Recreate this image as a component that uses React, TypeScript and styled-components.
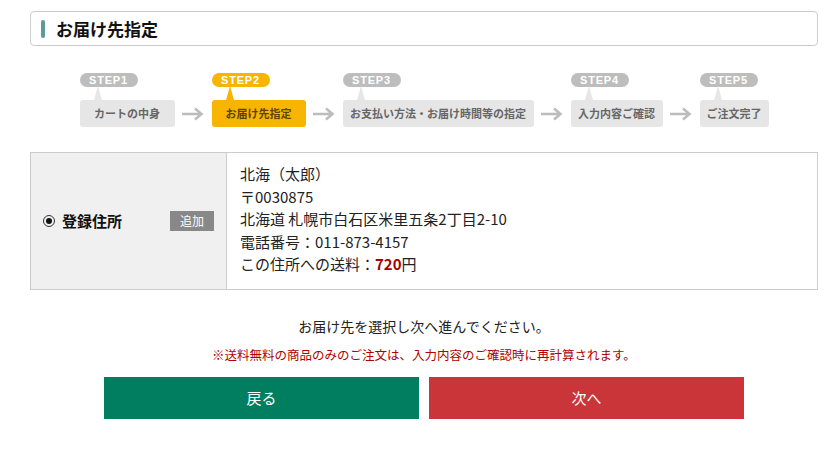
import { Fragment } from 'react';
import styled, { createGlobalStyle } from 'styled-components';

const GlobalStyle = createGlobalStyle`
  html, body {
    margin: 0;
    padding: 0;
    background: #fff;
  }
  body {
    font-family: "Noto Sans CJK JP", "Noto Sans", sans-serif;
    color: #222;
  }
`;

const Page = styled.div`
  width: 788px;
  padding: 11px 0 0 30px;
`;

const TitleBox = styled.h1`
  margin: 0;
  height: 35px;
  box-sizing: border-box;
  border: 1px solid #ccc;
  border-radius: 4px;
  display: flex;
  align-items: center;
  gap: 11px;
  padding-left: 10px;
  font-size: 17px;
  font-weight: 700;
  color: #111;
  &::before {
    content: '';
    width: 4px;
    height: 18px;
    border-radius: 2px;
    background: #5f9a98;
  }
`;

const Steps = styled.ol`
  list-style: none;
  margin: 27px 0 0;
  padding: 0;
  display: flex;
  justify-content: center;
  align-items: flex-end;
`;

const Step = styled.li`
  display: flex;
  flex-direction: column;
  align-items: flex-start;
  gap: 13px;
`;

const Badge = styled.span<{ $active?: boolean }>`
  position: relative;
  width: 58px;
  height: 14px;
  border-radius: 7px;
  text-align: center;
  background: ${(p) => (p.$active ? '#f7b500' : '#bdbdbd')};
  color: #fff;
  font-family: "Liberation Sans", Arial, sans-serif;
  font-size: 11px;
  font-weight: 700;
  line-height: 14px;
  letter-spacing: 0.8px;
  &::after {
    content: '';
    position: absolute;
    left: 14px;
    top: 13px;
    border-left: 4px solid transparent;
    border-right: 4px solid transparent;
    border-bottom: 14px solid ${(p) => (p.$active ? '#f7b500' : '#e6e6e6')};
  }
`;

const StepBox = styled.span<{ $active?: boolean; $width: number }>`
  width: ${(p) => p.$width}px;
  height: 27px;
  border-radius: 3px;
  text-align: center;
  background: ${(p) => (p.$active ? '#f7b500' : '#e6e6e6')};
  color: ${(p) => (p.$active ? '#5e4300' : '#666')};
  font-size: 11px;
  font-weight: 700;
  line-height: 27px;
  white-space: nowrap;
`;

const Arrow = styled.svg`
  width: 22px;
  height: 14px;
  margin: 0 7.5px 6px;
  flex: none;
`;

const AddressTable = styled.div`
  margin-top: 25px;
  display: grid;
  grid-template-columns: 196px 1fr;
  border: 1px solid #ccc;
`;

const LabelCell = styled.div`
  background: #f0f0f0;
  border-right: 1px solid #ccc;
  display: flex;
  align-items: center;
  justify-content: space-between;
  padding: 0 12px;
`;

const RadioLabel = styled.label`
  display: flex;
  align-items: center;
  gap: 7px;
  font-size: 15px;
  font-weight: 700;
  color: #111;
`;

const Radio = styled.span`
  width: 12px;
  height: 12px;
  border: 1px solid #333;
  border-radius: 50%;
  box-sizing: border-box;
  display: flex;
  align-items: center;
  justify-content: center;
  &::after {
    content: '';
    width: 6px;
    height: 6px;
    border-radius: 50%;
    background: #111;
  }
`;

const AddButton = styled.button`
  border: none;
  background: #888;
  color: #fff;
  font-family: inherit;
  font-size: 12px;
  width: 44px;
  height: 20px;
  padding: 0;
`;

const AddressCell = styled.div`
  padding: 10px 13px 13px;
  font-size: 15px;
  line-height: 22.5px;
  color: #222;
`;

const Price = styled.strong`
  color: #a50000;
  font-size: 15px;
`;

const Message = styled.p`
  margin: 26px 0 0;
  text-align: center;
  font-size: 14px;
`;

const Note = styled.p`
  margin: 9px 0 0;
  text-align: center;
  font-size: 12.5px;
  color: #b00000;
`;

const ButtonRow = styled.div`
  margin-top: 13px;
  display: flex;
  justify-content: center;
  gap: 10px;
`;

const ActionButton = styled.button<{ $tone: 'back' | 'next' }>`
  width: 315px;
  height: 42px;
  border: none;
  background: ${(p) => (p.$tone === 'back' ? '#007e5f' : '#c93538')};
  color: #fff;
  font-family: inherit;
  font-size: 15px;
`;

const steps = [
  { label: 'STEP1', text: 'カートの中身', width: 95 },
  { label: 'STEP2', text: 'お届け先指定', width: 94, active: true },
  { label: 'STEP3', text: 'お支払い方法・お届け時間等の指定', width: 191 },
  { label: 'STEP4', text: '入力内容ご確認', width: 92 },
  { label: 'STEP5', text: 'ご注文完了', width: 69 },
];

const StepArrow = () => (
  <Arrow viewBox="0 0 22 14">
    <path d="M0 7H19M13 1.5L19.5 7L13 12.5" fill="none" stroke="#bcbcbc" strokeWidth="2.5" />
  </Arrow>
);

const App = () => {
  return (
    <Page>
      <GlobalStyle />
      <TitleBox>お届け先指定</TitleBox>
      <Steps>
        {steps.map((s, i) => (
          <Fragment key={s.label}>
            {i > 0 && <StepArrow />}
            <Step>
              <Badge $active={s.active}>{s.label}</Badge>
              <StepBox $active={s.active} $width={s.width}>
                {s.text}
              </StepBox>
            </Step>
          </Fragment>
        ))}
      </Steps>
      <AddressTable>
        <LabelCell>
          <RadioLabel>
            <Radio />
            登録住所
          </RadioLabel>
          <AddButton>追加</AddButton>
        </LabelCell>
        <AddressCell>
          北海（太郎）
          <br />〒0030875
          <br />北海道 札幌市白石区米里五条2丁目2-10
          <br />電話番号：011-873-4157
          <br />この住所への送料：<Price>720</Price>円
        </AddressCell>
      </AddressTable>
      <Message>お届け先を選択し次へ進んでください。</Message>
      <Note>※送料無料の商品のみのご注文は、入力内容のご確認時に再計算されます。</Note>
      <ButtonRow>
        <ActionButton $tone="back">戻る</ActionButton>
        <ActionButton $tone="next">次へ</ActionButton>
      </ButtonRow>
    </Page>
  );
};

export default App;
